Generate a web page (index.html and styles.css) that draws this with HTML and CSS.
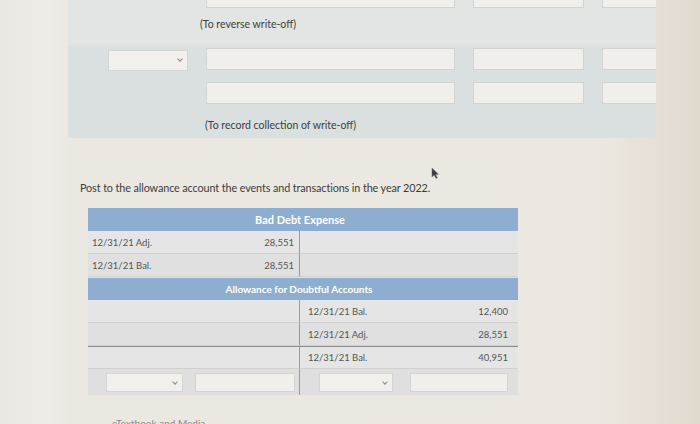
FILE: index.html
```html
<!DOCTYPE html>
<html>
<head>
<meta charset="utf-8">
<link rel="stylesheet" href="styles.css">
</head>
<body>
<div class="page">
  <div class="panel">
    <div class="grid">
      <div class="cell"></div>
      <div class="inp"></div>
      <div class="inp"></div>
      <div class="inp"></div>
    </div>
    <div class="note note-a">(To reverse write-off)</div>
    <div class="grid row-b">
      <div class="sel"><span class="chev"></span></div>
      <div class="inp"></div>
      <div class="inp"></div>
      <div class="inp"></div>
    </div>
    <div class="grid row-c">
      <div class="cell"></div>
      <div class="inp"></div>
      <div class="inp"></div>
      <div class="inp"></div>
    </div>
    <div class="note note-b">(To record collection of write-off)</div>
  </div>

  <p class="intro">Post to the allowance account the events and transactions in the year 2022.</p>

  <div class="taccount">
    <div class="head">Bad Debt Expense</div>
    <div class="tgrid">
      <div class="left row"><span>12/31/21 Adj.</span><span>28,551</span></div>
      <div class="right row"></div>
      <div class="left row"><span>12/31/21 Bal.</span><span>28,551</span></div>
      <div class="right row"></div>
    </div>
    <div class="head head2">Allowance for Doubtful Accounts</div>
    <div class="tgrid">
      <div class="left row"></div>
      <div class="right row"><span>12/31/21 Bal.</span><span>12,400</span></div>
      <div class="left row"></div>
      <div class="right row"><span>12/31/21 Adj.</span><span>28,551</span></div>
      <div class="left row topline"></div>
      <div class="right row topline"><span>12/31/21 Bal.</span><span>40,951</span></div>
      <div class="left inrow"><div class="sel s1"><span class="chev"></span></div><div class="inp i1"></div></div>
      <div class="right inrow"><div class="sel s2"><span class="chev"></span></div><div class="inp i2"></div></div>
    </div>
  </div>

  <div class="footer">eTextbook and Media</div>

  <svg class="cursor" width="8" height="12" viewBox="0 0 8 12"><path d="M1 1 L1 10 L3.2 8 L5 11.5 L6.3 10.8 L4.6 7.4 L7.4 7.2 Z" fill="#3a3a3a" stroke="#777" stroke-width="0.6"/></svg>
</div>
</body>
</html>
```

FILE: styles.css
```css
* { box-sizing: border-box; }
html, body {
  margin: 0;
  padding: 0;
  width: 700px;
  height: 424px;
  overflow: hidden;
}
body {
  font-family: Lato, "Open Sans", sans-serif;
  color: #4a4a4a;
  background: linear-gradient(to right, #ebe8e3 0px, #efece7 50px, #ebe8e2 70px, #ece8e1 600px, #e6e0d6 650px, #e0d9ce 700px);
}
.page {
  position: relative;
  width: 700px;
  height: 424px;
  overflow: hidden;
}
.panel {
  margin-top: -14px;
  margin-left: 68px;
  width: 588px;
  height: 152px;
  background: linear-gradient(to bottom, #e2e5e4 0px, #e2e5e4 58px, #dadfdf 60px, #dadfdf 152px);
  overflow: hidden;
  padding-left: 40px;
}
.grid {
  display: grid;
  grid-template-columns: 80px 249px 111px 70px;
  column-gap: 18px;
  height: 22px;
}
.row-b { margin-top: 18px; }
.row-c { margin-top: 12px; }
.inp {
  background: #f0efeb;
  border: 1px solid #d2d4d2;
  height: 22px;
}
.sel {
  background: #f1f0ec;
  border: 1px solid #d3d5d3;
  height: 21px;
  margin-top: 2px;
  position: relative;
}
.chev {
  position: absolute;
  right: 5px;
  top: 6px;
  width: 4px;
  height: 4px;
  border-right: 1px solid #888;
  border-bottom: 1px solid #888;
  transform: rotate(45deg);
}
.note {
  font-size: 10.5px;
  color: #404040;
  line-height: 12px;
}
.note-a {
  margin-top: 10px;
  margin-left: 92px;
}
.note-b {
  margin-top: 15px;
  margin-left: 97px;
}
.intro {
  margin: 44px 0 0 80px;
  font-size: 10.8px;
  line-height: 12px;
  color: #3c3c3c;
  letter-spacing: -0.1px;
}
.taccount {
  margin: 14px 0 0 88px;
  width: 430px;
  background: #e1e2e1;
}
.head {
  height: 23px;
  background: #8daed0;
  color: #fff;
  font-weight: bold;
  font-size: 11px;
  line-height: 23px;
  text-align: center;
  padding-right: 6px;
}
.head2 {
  font-size: 10px;
  font-weight: bold;
  margin-top: 1px;
  padding-right: 8px;
  height: 22px;
  line-height: 22px;
}
.tgrid {
  display: grid;
  grid-template-columns: 212px 218px;
}
.row {
  height: 23px;
  display: flex;
  justify-content: space-between;
  align-items: center;
  font-size: 9.5px;
  color: #555;
  padding: 0 5px 0 4px;
  background: #e4e5e4;
  border-bottom: 1px solid #cfd0cf;
}
.left { border-right: 1px solid #9a9b9b; }
.right { padding-left: 8px; padding-right: 10px; }
.tgrid .row:nth-child(3), .tgrid .row:nth-child(4) { background: #dfe0df; }
.topline { border-top: 1px solid #8c8d8d; height: 23px; }
.inrow {
  height: 26px;
  display: flex;
  align-items: center;
  background: #dedfde;
}
.inrow .sel, .inrow .inp { margin-top: 0; height: 19px; }
.s1 { width: 77px; margin-left: 18px; }
.i1 { width: 100px; margin-left: 12px; }
.s2 { width: 74px; margin-left: 11px; }
.i2 { width: 98px; margin-left: 17px; }
.footer {
  margin: 22px 0 0 112px;
  font-size: 10px;
  color: #8a8a8a;
  line-height: 12px;
}
.cursor {
  position: absolute;
  left: 431px;
  top: 167px;
}
```
